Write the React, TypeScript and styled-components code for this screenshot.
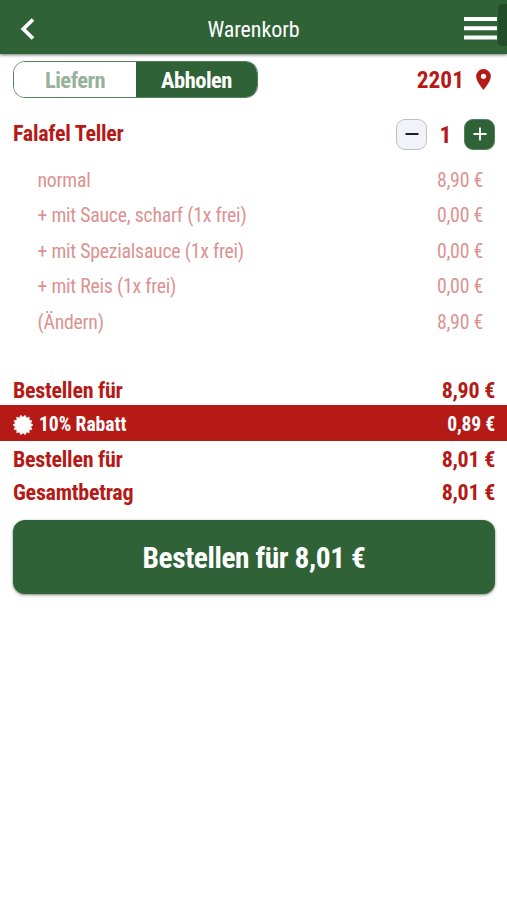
import React from 'react';
import styled, { createGlobalStyle } from 'styled-components';

const green = '#2f6237';
const red = '#b51a17';

const GlobalStyle = createGlobalStyle`
  * { box-sizing: border-box; }
  body {
    margin: 0;
    background: #fff;
    color: ${red};
    font-family: 'Roboto Condensed', Roboto, sans-serif;
    font-stretch: 75%;
  }
`;

const Page = styled.div`
  min-height: 900px;
  background: #fff;
  overflow: hidden;
`;

const Button = styled.button`
  margin: 0;
  padding: 0;
  border: 0;
  font-family: inherit;
  font-stretch: inherit;
  cursor: pointer;
`;

const Header = styled.header`
  position: relative;
  display: grid;
  grid-template-columns: 60px 1fr 60px;
  align-items: center;
  height: 54px;
  background: ${green};
  color: #fff;
  box-shadow: 0 1px 3px rgba(0, 0, 0, 0.55);
`;

const Title = styled.h1`
  margin: 6px 0 0;
  text-align: center;
  font-size: 22px;
  line-height: 26px;
  font-weight: 400;
  letter-spacing: -0.1px;
`;

const IconButton = styled(Button)<{ $side: 'left' | 'right' }>`
  display: flex;
  justify-content: ${(p) => (p.$side === 'left' ? 'flex-start' : 'flex-end')};
  padding: ${(p) => (p.$side === 'left' ? '3px 0 0 20px' : '3px 10px 0 0')};
  background: none;
  color: #fff;
`;

const ScrollThumb = styled.span`
  position: absolute;
  top: 4px;
  right: 0;
  width: 9px;
  height: 42px;
  border-radius: 4px 0 0 4px;
  background: rgba(20, 55, 28, 0.5);
`;

const ModeRow = styled.div`
  display: flex;
  justify-content: space-between;
  align-items: center;
  height: 37px;
  margin: 7px 13px 0;
`;

const Toggle = styled.div`
  display: grid;
  grid-template-columns: 122px 1fr;
  width: 245px;
  height: 37px;
  border: 1px solid #54805b;
  border-radius: 12px;
  overflow: hidden;
`;

const ToggleOption = styled(Button)<{ $active?: boolean }>`
  padding-top: 2px;
  background: ${(p) => (p.$active ? green : '#fff')};
  color: ${(p) => (p.$active ? '#fff' : '#97b19b')};
  font-size: 22.5px;
  line-height: 33px;
  font-weight: 700;
  letter-spacing: -0.5px;
`;

const Postcode = styled.div`
  display: flex;
  align-items: center;
  gap: 12px;
  padding-right: 3px;
  font-size: 23.4px;
  line-height: 30px;
  font-weight: 700;
`;

const ItemRow = styled.div`
  display: flex;
  justify-content: space-between;
  align-items: center;
  height: 32px;
  margin: 20px 12px 0 13px;
`;

const ItemName = styled.h2`
  margin: 0;
  font-size: 22px;
  line-height: 32px;
  font-weight: 700;
  letter-spacing: -0.26px;
`;

const Stepper = styled.div`
  display: grid;
  grid-template-columns: 31px 37px 31px;
  align-items: center;
`;

const StepButton = styled(Button)<{ $filled?: boolean }>`
  display: flex;
  align-items: center;
  justify-content: center;
  width: 31px;
  height: 31px;
  border: 1px solid ${(p) => (p.$filled ? '#54805b' : '#bfc1c4')};
  border-radius: 9px;
  background: ${(p) => (p.$filled ? green : '#f1f3f8')};
  color: ${(p) => (p.$filled ? '#fff' : '#1d1f22')};
`;

const Quantity = styled.span`
  padding-top: 2px;
  text-align: center;
  font-size: 23.6px;
  line-height: 32px;
  font-weight: 700;
`;

const Options = styled.ul`
  list-style: none;
  margin: 13px 24px 0 37.5px;
  padding: 0;
`;

const Option = styled.li`
  display: flex;
  justify-content: space-between;
  height: 35.4px;
  line-height: 36.6px;
  font-size: 19.8px;
  letter-spacing: -0.24px;
  color: #dc9291;
`;

const Summary = styled.section`
  margin-top: 34px;
`;

const SumRow = styled.div`
  display: flex;
  justify-content: space-between;
  height: 33px;
  padding: 0 12px 0 13px;
  line-height: 34px;
  font-size: 22px;
  font-weight: 700;
  letter-spacing: -0.26px;
`;

const DiscountRow = styled.div`
  display: flex;
  justify-content: space-between;
  align-items: center;
  height: 36px;
  margin: -1.5px 0 1.5px;
  padding: 3px 12px 0 13px;
  line-height: 33px;
  font-size: 19.6px;
  font-weight: 700;
  letter-spacing: -0.2px;
  background: ${red};
  color: #fff;
`;

const DiscountLabel = styled.span`
  display: flex;
  align-items: center;
  gap: 6px;
  letter-spacing: -0.05px;
`;

const OrderButton = styled(Button)`
  display: block;
  width: calc(100% - 25px);
  height: 74px;
  margin: 11px 12px 0 13px;
  padding-top: 3px;
  border-radius: 12px;
  background: ${green};
  color: #fff;
  font-size: 29.4px;
  line-height: 71px;
  font-weight: 700;
  letter-spacing: -0.4px;
  box-shadow: 0 1px 3px rgba(0, 0, 0, 0.5);
`;

const options = [
  ['normal', '8,90 €'],
  ['+ mit Sauce, scharf (1x frei)', '0,00 €'],
  ['+ mit Spezialsauce (1x frei)', '0,00 €'],
  ['+ mit Reis (1x frei)', '0,00 €'],
  ['(Ändern)', '8,90 €'],
];

const badgePoints = Array.from({ length: 28 }, (_, i) => {
  const r = i % 2 ? 7.8 : 10;
  const a = ((i + 1) * Math.PI) / 14;
  return `${10 + r * Math.sin(a)},${10 - r * Math.cos(a)}`;
}).join(' ');

export default function App() {
  return (
    <Page>
      <GlobalStyle />
      <Header>
        <IconButton $side="left" aria-label="Zurück">
          <svg width="15" height="22" viewBox="0 0 15 22" fill="none" stroke="currentColor" strokeWidth="3.8">
            <path d="M13 1.500 3.300 11 13 20.500" />
          </svg>
        </IconButton>
        <Title>Warenkorb</Title>
        <IconButton $side="right" aria-label="Menü">
          <svg width="33" height="23" viewBox="0 0 33 23" fill="currentColor">
            <path d="M0 0h33v4H0zM0 9.300h33v4H0zM0 18.600h33v4H0z" />
          </svg>
        </IconButton>
        <ScrollThumb />
      </Header>

      <ModeRow>
        <Toggle>
          <ToggleOption>Liefern</ToggleOption>
          <ToggleOption $active>Abholen</ToggleOption>
        </Toggle>
        <Postcode>
          2201
          <svg width="15" height="21" viewBox="0 0 14 20" fill="currentColor">
            <path fillRule="evenodd" d="M7 0a7 7 0 0 0-7 7c0 5.200 7 13 7 13s7-7.800 7-13a7 7 0 0 0-7-7zm0 9.500a2.500 2.500 0 1 1 0-5 2.500 2.500 0 0 1 0 5z" />
          </svg>
        </Postcode>
      </ModeRow>

      <ItemRow>
        <ItemName>Falafel Teller</ItemName>
        <Stepper>
          <StepButton aria-label="Weniger">
            <svg width="14" height="14" viewBox="0 0 14 14" stroke="currentColor" strokeWidth="2">
              <path d="M.5 7h13" />
            </svg>
          </StepButton>
          <Quantity>1</Quantity>
          <StepButton $filled aria-label="Mehr">
            <svg width="14" height="14" viewBox="0 0 14 14" stroke="currentColor" strokeWidth="1.8">
              <path d="M.5 7h13M7 .5v13" />
            </svg>
          </StepButton>
        </Stepper>
      </ItemRow>

      <Options>
        {options.map(([label, price]) => (
          <Option key={label}>
            <span>{label}</span>
            <span>{price}</span>
          </Option>
        ))}
      </Options>

      <Summary>
        <SumRow><span>Bestellen für</span><span>8,90 €</span></SumRow>
        <DiscountRow>
          <DiscountLabel>
            <svg width="20" height="20" viewBox="0 0 20 20" fill="currentColor">
              <polygon points={badgePoints} stroke="currentColor" strokeWidth="0.6" />
            </svg>
            10% Rabatt
          </DiscountLabel>
          <span>0,89 €</span>
        </DiscountRow>
        <SumRow><span>Bestellen für</span><span>8,01 €</span></SumRow>
        <SumRow><span>Gesamtbetrag</span><span>8,01 €</span></SumRow>
      </Summary>

      <OrderButton>Bestellen für 8,01 €</OrderButton>
    </Page>
  );
}
